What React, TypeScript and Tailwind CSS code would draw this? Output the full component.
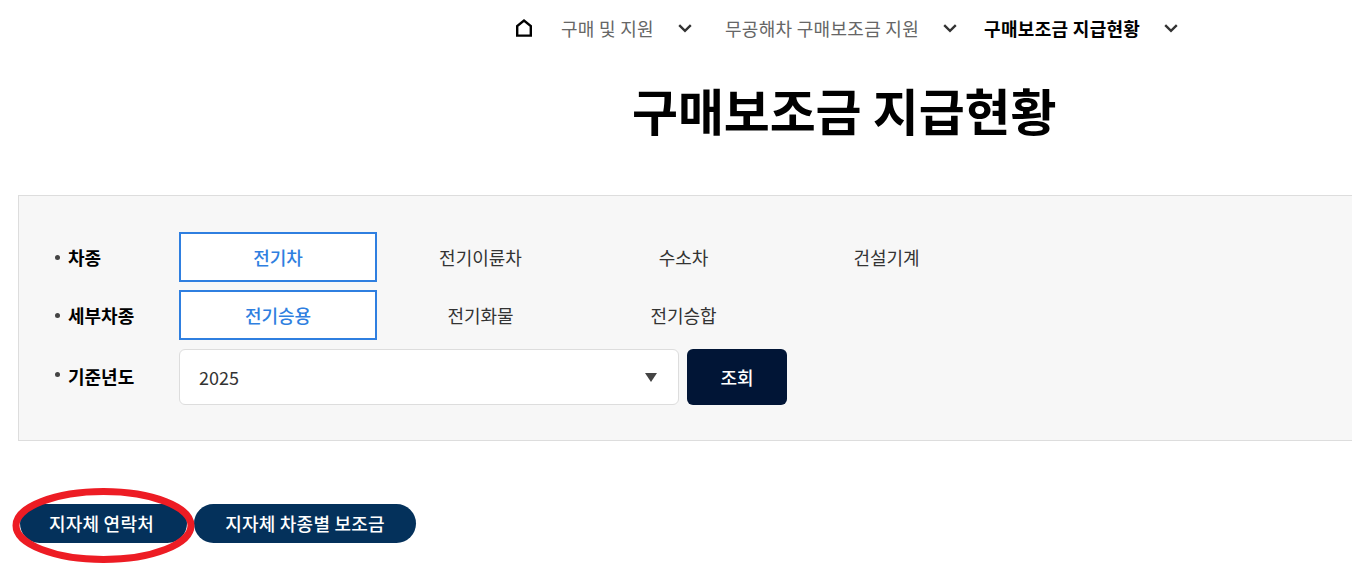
import React from 'react';

const FONT = "font-['Noto_Sans_CJK_KR','Noto_Sans',sans-serif]";

function Chevron() {
  return (
    <svg width="14" height="9" viewBox="0 0 14 9" fill="none" stroke="#333" strokeWidth="2.4" aria-hidden="true">
      <path d="M1.2 1.2 7 6.8l5.8-5.6" />
    </svg>
  );
}

function HomeIcon() {
  return (
    <svg width="18" height="18" viewBox="0 0 18 18" fill="none" stroke="#000" strokeWidth="2.4" aria-hidden="true">
      <path d="M2.2 16.6V7L9 1.6 15.8 7v9.6z" />
    </svg>
  );
}

function Label({ text, dotClass = '', textClass = '' }: { text: string; dotClass?: string; textClass?: string }) {
  return (
    <div className="-ml-[1px] flex w-[161px] items-center text-[18px] font-bold text-black">
      <span className={`ml-[37px] mr-2 h-[5px] w-[5px] shrink-0 rounded-full bg-[#444] ${dotClass}`} />
      <span className={textClass}>{text}</span>
    </div>
  );
}

function Tab({ text, active = false }: { text: string; active?: boolean }) {
  if (active) {
    return (
      <div className="mr-[2px] flex h-[50px] w-[198px] items-center justify-center border-2 border-[#2f7fe0] bg-white text-[18px] font-medium text-[#2f7fe0]">
        {text}
      </div>
    );
  }
  return <div className="flex h-[50px] w-[203px] items-center justify-center text-[18px] text-[#333]">{text}</div>;
}

export default function App() {
  return (
    <div className={`relative h-[582px] w-[1352px] overflow-hidden bg-white ${FONT}`}>
      <nav className="flex h-[56px] items-center pl-[515px] text-[18px] tracking-[0.3px]">
        <HomeIcon />
        <span className="ml-[28px] text-[#666]">구매 및 지원</span>
        <span className="ml-[24px]"><Chevron /></span>
        <span className="ml-[33px] text-[#666]">무공해차 구매보조금 지원</span>
        <span className="ml-6"><Chevron /></span>
        <span className="ml-[27px] font-bold text-black">구매보조금 지급현황</span>
        <span className="ml-[24px]"><Chevron /></span>
      </nav>

      <h1 className="ml-[632px] mt-[18px] whitespace-nowrap text-[50px] font-bold leading-[70px] tracking-[-0.1px] text-black">
        구매보조금 지급현황
      </h1>

      <section className="ml-[18px] mt-[51px] h-[246px] w-[1340px] border border-[#ddd] bg-[#f7f7f7] pt-[36px]">
        <div className="flex h-[50px] items-center">
          <Label text="차종" />
          <div className="flex items-center">
            <Tab text="전기차" active />
            <Tab text="전기이륜차" />
            <Tab text="수소차" />
            <Tab text="건설기계" />
          </div>
        </div>
        <div className="mt-2 flex h-[50px] items-center">
          <Label text="세부차종" />
          <div className="flex items-center">
            <Tab text="전기승용" active />
            <Tab text="전기화물" />
            <Tab text="전기승합" />
          </div>
        </div>
        <div className="mt-[9px] flex h-[56px] items-center">
          <Label text="기준년도" dotClass="-mt-[5px]" textClass="-mt-[2px]" />
          <div className="flex h-[56px] w-[500px] items-center justify-between rounded-md border border-[#ddd] bg-white pl-[19px] pr-[21px] text-[18px] text-[#333]">
            <span>2025</span>
            <svg width="12" height="9" viewBox="0 0 12 9" fill="#444" aria-hidden="true">
              <path d="M0 0h12L6 9z" />
            </svg>
          </div>
          <button className="ml-2 h-[56px] w-[100px] rounded-md bg-[#011536] text-[18px] font-medium text-white">조회</button>
        </div>
      </section>

      <div className="ml-[20px] mt-[63px] flex gap-[7px] text-[18px] font-medium tracking-[0.2px] text-white">
        <button className="h-[39px] w-[167px] rounded-[20px] bg-[#04315b] pr-1">지자체 연락처</button>
        <button className="h-[39px] w-[222px] rounded-[20px] bg-[#04315b]">지자체 차종별 보조금</button>
      </div>

      {/* hand-drawn red highlight over the first button */}
      <svg className="pointer-events-none absolute left-[10px] top-[485px]" width="190" height="82" viewBox="0 0 190 82" fill="none" aria-hidden="true">
        <ellipse cx="93.5" cy="40.5" rx="87.5" ry="34" stroke="#ed1c24" strokeWidth="7" />
      </svg>
    </div>
  );
}
